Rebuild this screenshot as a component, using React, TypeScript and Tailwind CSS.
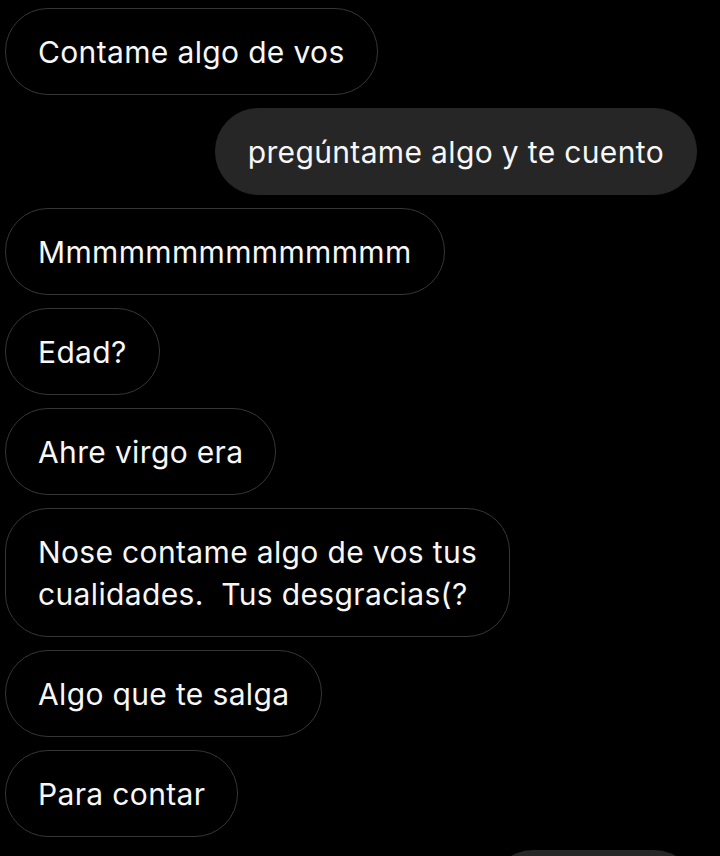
const messages: { text: string; mine?: boolean }[] = [
  { text: 'Contame algo de vos' },
  { text: 'pregúntame algo y te cuento', mine: true },
  { text: 'Mmmmmmmmmmmmmm' },
  { text: 'Edad?' },
  { text: 'Ahre virgo era' },
  { text: 'Nose contame algo de vos tus\ncualidades.  Tus desgracias(?' },
  { text: 'Algo que te salga' },
  { text: 'Para contar' },
];

function Bubble({ text, mine }: { text: string; mine?: boolean }) {
  return (
    <div className={`flex ${mine ? 'justify-end pr-[23px]' : 'justify-start pl-[5px]'}`}>
      <div
        className={`whitespace-pre px-[32px] py-[21.5px] text-[30px] tracking-[0.35px] leading-[42px] text-[#f7f7f7] rounded-[43px] border ${
          mine ? 'bg-[#262626] border-[#262626]' : 'bg-black border-[#363636]'
        }`}
      >
        {text}
      </div>
    </div>
  );
}

export default function App() {
  return (
    <div
      className="h-[856px] w-[720px] overflow-hidden bg-black pt-[8px]"
      style={{ fontFamily: 'Inter, "Open Sans", sans-serif' }}
    >
      <div className="flex flex-col gap-[13px]">
        {messages.map((m, i) => (
          <Bubble key={i} text={m.text} mine={m.mine} />
        ))}
        {/* next own message, cut off by the screen edge */}
        <div className="flex justify-end pr-[23px]">
          <div className="h-[87px] w-[207px] rounded-[43px] bg-[#262626]" />
        </div>
      </div>
    </div>
  );
}
